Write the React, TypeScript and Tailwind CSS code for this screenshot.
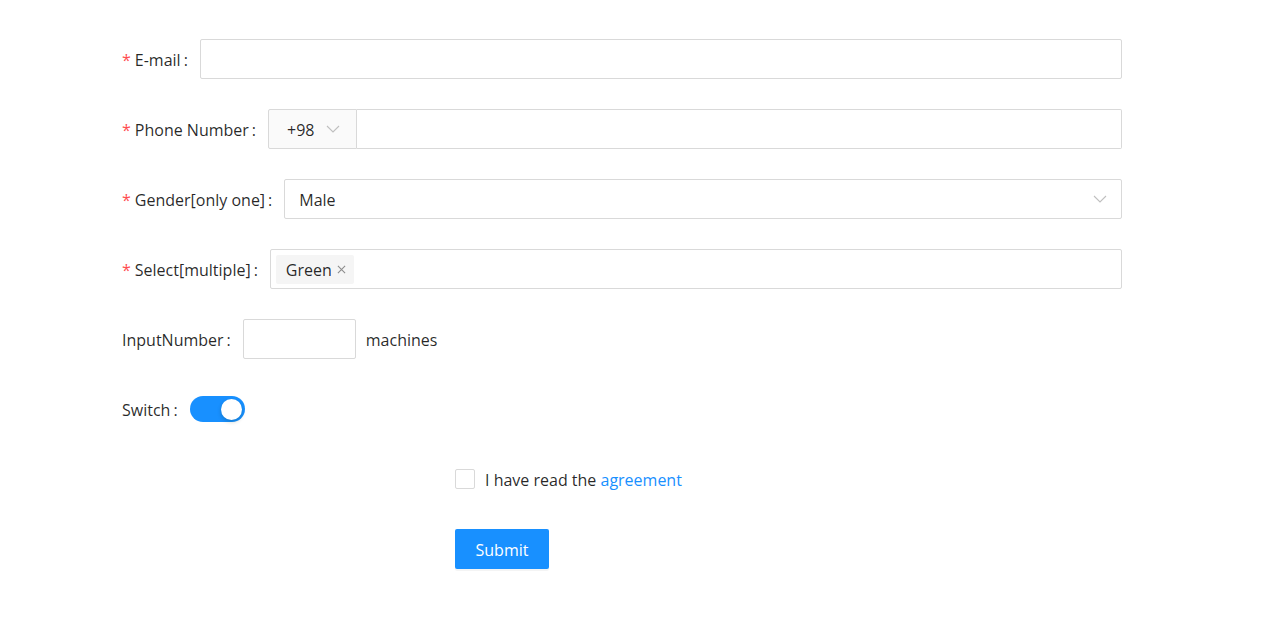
function Label({ text, required }: { text: string; required?: boolean }) {
  return (
    <label className="flex shrink-0 items-center whitespace-nowrap pt-px">
      {required && <span className="mr-1 text-[#ff4d4f]">*</span>}
      <span>{text}</span>
      <span className="ml-[3px] mr-[12px]">:</span>
    </label>
  );
}

function Chevron({ className }: { className?: string }) {
  return (
    <svg viewBox="0 0 14 8" className={className} fill="none" stroke="currentColor" strokeWidth={1.1}>
      <polyline points="1,1 7,7 13,1" />
    </svg>
  );
}

export default function App() {
  return (
    <div
      className="min-h-[623px] bg-white text-base text-[rgba(0,0,0,0.85)]"
      style={{ fontFamily: '"Open Sans", "Noto Sans", sans-serif' }}
    >
      <form className="ml-[122px] flex w-[1000px] flex-col pt-[39px]">
        <div className="mb-[30px] flex h-10 items-center">
          <Label text="E-mail" required />
          <input className="h-10 flex-1 rounded-[2px] border border-[#d9d9d9] px-3 outline-none" />
        </div>

        <div className="mb-[30px] flex h-10 items-center">
          <Label text="Phone Number" required />
          <div className="flex h-10 flex-1">
            <div className="flex w-[89px] items-center rounded-l-[2px] border border-[#d9d9d9] bg-[#fafafa] pl-[18px]">
              <span className="pt-px">+98</span>
              <Chevron className="ml-[12px] h-[8px] w-[14px] text-[#bfbfbf]" />
            </div>
            <input className="h-10 flex-1 rounded-r-[2px] border border-l-0 border-[#d9d9d9] px-3 outline-none" />
          </div>
        </div>

        <div className="mb-[30px] flex h-10 items-center">
          <Label text="Gender[only one]" required />
          <div className="flex h-10 flex-1 items-center justify-between rounded-[2px] border border-[#d9d9d9] pl-[14px] pr-[14px]">
            <span className="pt-px">Male</span>
            <Chevron className="h-[8px] w-[14px] text-[#bfbfbf]" />
          </div>
        </div>

        <div className="mb-[30px] flex h-10 items-center">
          <Label text="Select[multiple]" required />
          <div className="flex h-10 flex-1 items-center rounded-[2px] border border-[#d9d9d9] px-[5px]">
            <span className="flex h-[29px] items-center rounded-[2px] bg-[#f5f5f5] pl-[10px] pr-[8px] pt-px">
              Green
              <svg viewBox="0 0 10 10" className="ml-[5px] h-[9px] w-[9px] text-[#8c8c8c]" fill="none" stroke="currentColor" strokeWidth={1.2}>
                <path d="M1 1L9 9M9 1L1 9" />
              </svg>
            </span>
          </div>
        </div>

        <div className="mb-[30px] flex h-10 items-center">
          <Label text="InputNumber" />
          <input className="h-10 w-[113px] rounded-[2px] border border-[#d9d9d9] px-3 outline-none" />
          <span className="ml-[10px] pt-px">machines</span>
        </div>

        <div className="mb-[30px] flex h-10 items-center">
          <Label text="Switch" />
          <button
            type="button"
            className="flex h-[26px] w-[55px] items-center justify-end rounded-full bg-[#1890ff] pr-[3px]"
          >
            <span className="h-[21px] w-[21px] rounded-full bg-white shadow-[0_2px_4px_rgba(0,35,11,0.2)]" />
          </button>
        </div>

        <div className="mb-[30px] flex h-10 items-center pl-[333px]">
          <span className="h-5 w-5 rounded-[2px] border border-[#d9d9d9] bg-white" />
          <span className="ml-[10px] pt-px">
            I have read the <a className="text-[#1890ff]">agreement</a>
          </span>
        </div>

        <div className="flex h-10 items-center pl-[333px]">
          <button
            type="button"
            className="h-10 w-[94px] rounded-[2px] bg-[#1890ff] pt-px text-white shadow-[0_2px_0_rgba(0,0,0,0.045)]"
          >
            Submit
          </button>
        </div>
      </form>
    </div>
  );
}
